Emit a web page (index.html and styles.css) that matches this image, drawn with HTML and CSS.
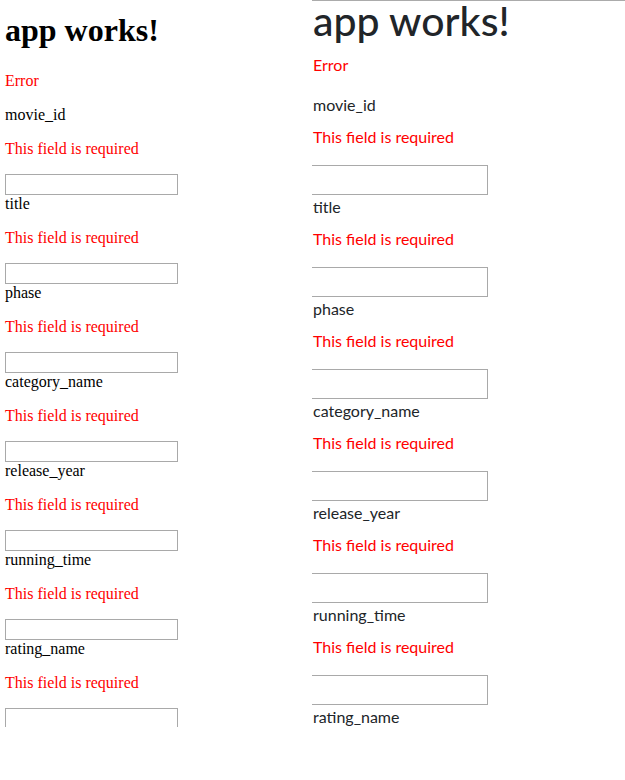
FILE: index.html
```html
<!DOCTYPE html>
<html lang="en">
<head>
<meta charset="utf-8">
<title>app works!</title>
<link rel="stylesheet" href="styles.css">
</head>
<body>
<div class="page">
  <section class="pane pane-serif">
    <div class="pane-inner">
      <h1 class="title">app works!</h1>
      <p class="err">Error</p>
      <form class="fields">
        <div class="field"><label class="lbl">movie_id</label><p class="err">This field is required</p><input class="inp" type="text"></div>
        <div class="field"><label class="lbl">title</label><p class="err">This field is required</p><input class="inp" type="text"></div>
        <div class="field"><label class="lbl">phase</label><p class="err">This field is required</p><input class="inp" type="text"></div>
        <div class="field"><label class="lbl">category_name</label><p class="err">This field is required</p><input class="inp" type="text"></div>
        <div class="field"><label class="lbl">release_year</label><p class="err">This field is required</p><input class="inp" type="text"></div>
        <div class="field"><label class="lbl">running_time</label><p class="err">This field is required</p><input class="inp" type="text"></div>
        <div class="field"><label class="lbl">rating_name</label><p class="err">This field is required</p><input class="inp" type="text"></div>
      </form>
    </div>
  </section>
  <section class="pane pane-sans">
    <div class="pane-inner">
      <h1 class="title">app works!</h1>
      <p class="err">Error</p>
      <form class="fields">
        <div class="field"><label class="lbl">movie_id</label><p class="err">This field is required</p><input class="inp" type="text"></div>
        <div class="field"><label class="lbl">title</label><p class="err">This field is required</p><input class="inp" type="text"></div>
        <div class="field"><label class="lbl">phase</label><p class="err">This field is required</p><input class="inp" type="text"></div>
        <div class="field"><label class="lbl">category_name</label><p class="err">This field is required</p><input class="inp" type="text"></div>
        <div class="field"><label class="lbl">release_year</label><p class="err">This field is required</p><input class="inp" type="text"></div>
        <div class="field"><label class="lbl">running_time</label><p class="err">This field is required</p><input class="inp" type="text"></div>
        <div class="field"><label class="lbl">rating_name</label></div>
      </form>
    </div>
  </section>
</div>
</body>
</html>
```

FILE: styles.css
```css
html, body {
  margin: 0;
  padding: 0;
  background: #ffffff;
}

.page {
  display: flex;
  align-items: flex-start;
  width: 625px;
}

.pane {
  overflow: hidden;
  box-sizing: border-box;
}

.lbl {
  display: block;
}

.inp {
  display: block;
  box-sizing: border-box;
  margin: 0;
  padding: 0;
  border: 1px solid #a9a9a9;
  background: #ffffff;
  outline: none;
}

/* ---------- left: unstyled serif page ---------- */
.pane-serif {
  width: 312px;
  height: 727px;
  flex: none;
  font-family: "Liberation Serif", "Times New Roman", serif;
  font-size: 16px;
  color: #000000;
}

.pane-serif .pane-inner {
  padding: 13px 0 0 5px;
}

.pane-serif .title {
  margin: 0 0 24px;
  font-size: 32px;
  font-weight: bold;
  line-height: 35px;
}

.pane-serif .err {
  margin: 0 0 16px;
  line-height: 18px;
  color: #ff0000;
}

.pane-serif .field .err {
  margin-top: 16px;
}

.pane-serif .lbl {
  line-height: 18px;
}

.pane-serif .inp {
  width: 173px;
  height: 21px;
}

/* ---------- right: bootstrap-like page ---------- */
.pane-sans {
  flex: 1;
  height: 730px;
  border-top: 1px solid #ababab;
  font-family: Lato, "Open Sans", sans-serif;
  font-size: 16px;
  color: #212529;
}

.pane-sans .pane-inner {
  padding-left: 1px;
}

.pane-sans .title {
  margin: 0 0 12px;
  font-size: 41px;
  font-weight: 500;
  line-height: 40px;
}

.pane-sans .err {
  margin: 0 0 16px;
  line-height: 24px;
  color: #ff0000;
}

.pane-sans .lbl {
  margin-bottom: 8px;
  line-height: 24px;
}

.pane-sans .inp {
  margin-left: -2px;
  width: 177px;
  height: 30px;
}
```
